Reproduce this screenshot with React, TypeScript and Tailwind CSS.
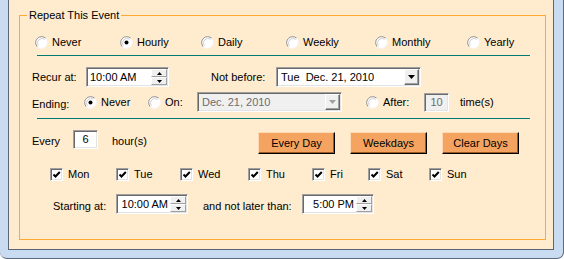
import type { ReactNode } from "react";

const sunken =
  "box-border border border-t-[#a0a0a0] border-l-[#a0a0a0] border-b-white border-r-white shadow-[inset_1px_1px_0_#696969,inset_-1px_-1px_0_#e3e3e3]";

function Radio({ checked = false }: { checked?: boolean }) {
  return (
    <svg width="13" height="13" viewBox="0 0 13 13" className="shrink-0">
      <circle cx="6.5" cy="6.5" r="6" fill="#fff" />
      <path d="M2.26 10.74 A6 6 0 0 1 10.74 2.26" fill="none" stroke="#8f8f8f" />
      <path d="M10.74 2.26 A6 6 0 0 1 2.26 10.74" fill="none" stroke="#f4f4f4" />
      <path d="M3.3 9.7 A4.6 4.6 0 0 1 9.7 3.3" fill="none" stroke="#d0d0d0" />
      {checked ? <circle cx="6.5" cy="6.5" r="2" fill="#000" /> : null}
    </svg>
  );
}

function Check() {
  return (
    <div className={`flex h-[13px] w-[13px] shrink-0 items-center justify-center bg-white ${sunken}`}>
      <svg width="9" height="9" viewBox="0 0 9 9">
        <path d="M1.5 4.5 L3.5 6.5 L7.8 2" fill="none" stroke="#000" strokeWidth="2" />
      </svg>
    </div>
  );
}

function SpinButton({ up }: { up?: boolean }) {
  return (
    <div className="flex flex-1 items-center justify-center border border-t-white border-l-white border-b-[#a0a0a0] border-r-[#a0a0a0] bg-[#f0f0f0]">
      <svg width="5" height="3" viewBox="0 0 5 3">
        <path d={up ? "M0 3 L2.5 0 L5 3Z" : "M0 0 L5 0 L2.5 3Z"} fill="#000" />
      </svg>
    </div>
  );
}

function TimeBox({ value, width, right }: { value: string; width: string; right?: boolean }) {
  return (
    <div className={`flex h-[20px] bg-white ${width} ${sunken}`}>
      <span className={`flex-1 leading-[18px] ${right ? "pr-[2px] text-right" : "pl-[3px]"}`}>{value}</span>
      <div className="my-[1px] mr-[1px] flex w-[16px] flex-col">
        <SpinButton up />
        <SpinButton />
      </div>
    </div>
  );
}

function Combo({ value, disabled }: { value: string; disabled?: boolean }) {
  return (
    <div className={`flex h-[20px] w-[145px] ${disabled ? "bg-[#f0f0f0] text-[#6d6d6d]" : "bg-white"} ${sunken}`}>
      <span className="flex-1 whitespace-pre pl-[4px] leading-[18px]">{value}</span>
      <div className="my-[1px] mr-[1px] flex w-[15px] items-center justify-center border border-t-white border-l-white border-b-[#696969] border-r-[#696969] bg-[#f0f0f0] shadow-[inset_-1px_-1px_0_#a0a0a0]">
        <svg width="7" height="4" viewBox="0 0 7 4">
          <path d="M0 0 L7 0 L3.5 4Z" fill={disabled ? "#a0a0a0" : "#000"} />
        </svg>
      </div>
    </div>
  );
}

function OrangeButton({ children }: { children: ReactNode }) {
  return (
    <button
      type="button"
      className="h-[22px] w-[77px] border border-t-[#ffd9b4] border-l-[#ffd9b4] border-b-black border-r-black bg-[#f4a460] shadow-[inset_-1px_-1px_0_#9a5a28] leading-[18px]"
    >
      {children}
    </button>
  );
}

const frequencies: [string, string, boolean][] = [
  ["Never", "w-[85px]", false],
  ["Hourly", "w-[81px]", true],
  ["Daily", "w-[85px]", false],
  ["Weekly", "w-[89px]", false],
  ["Monthly", "w-[92px]", false],
  ["Yearly", "", false]
];

const days: [string, string][] = [
  ["Mon", "w-[66px]"],
  ["Tue", "w-[64px]"],
  ["Wed", "w-[68px]"],
  ["Thu", "w-[64px]"],
  ["Fri", "w-[56px]"],
  ["Sat", "w-[61px]"],
  ["Sun", ""]
];

export default function App() {
  return (
    <div className="box-border h-[259px] w-[564px] overflow-hidden rounded-b-[7px] border-r border-b border-[#5f6b7a] bg-[#c8dbf1] pr-[9px] pb-[8px] pl-[8px] font-['Liberation_Sans',Arial,sans-serif] text-[11px] leading-[13px] text-black">
      <div className="box-border h-[250px] border-x border-b border-[#5a6473] bg-[#ffebcd] pt-[9px] pr-[7px] pl-[10px]">
        <fieldset className="border border-[#ffa833] pb-[25px]">
          <legend className="ml-[7px] px-[2px] leading-[13px]">Repeat This Event</legend>

          <div className="mt-[14px] flex h-[13px] items-center pl-[15px]">
            {frequencies.map(([label, width, checked]) => (
              <label className={`flex items-center gap-[4px] ${width}`} key={label}>
                <Radio checked={checked} />
                <span>{label}</span>
              </label>
            ))}
          </div>

          <div className="mt-[6px] ml-[17px] h-px w-[493px] bg-[#007a72]" />

          <div className="mt-[11px] flex h-[20px] items-center pl-[12px]">
            <span className="w-[54px]">Recur at:</span>
            <TimeBox value="10:00 AM" width="w-[83px]" />
            <span className="ml-[42px] w-[65px]">Not before:</span>
            <Combo value="Tue  Dec. 21, 2010" />
          </div>

          <div className="mt-[5px] flex h-[20px] items-center pl-[12px]">
            <span className="w-[52px] pt-[4px]">Ending:</span>
            <label className="flex w-[64px] items-center gap-[4px]">
              <Radio checked />
              <span>Never</span>
            </label>
            <label className="flex w-[49px] items-center gap-[4px]">
              <Radio />
              <span>On:</span>
            </label>
            <Combo value="Dec. 21, 2010" disabled />
            <label className="ml-[24px] flex w-[58px] items-center gap-[4px]">
              <Radio />
              <span>After:</span>
            </label>
            <div className={`h-[19px] w-[25px] bg-[#f0f0f0] text-center leading-[17px] text-[#6d6d6d] ${sunken}`}>10</div>
            <span className="ml-[11px]">time(s)</span>
          </div>

          <div className="mt-[6px] ml-[17px] h-px w-[493px] bg-[#007a72]" />

          <div className="mt-[11px] flex items-start pl-[12px]">
            <span className="mt-[5px] w-[41px]">Every</span>
            <div className={`h-[19px] w-[25px] bg-white text-center leading-[17px] ${sunken}`}>6</div>
            <span className="mt-[5px] ml-[14px] w-[146px]">hour(s)</span>
            <div className="mt-[2px] flex gap-[15px]">
              <OrangeButton>Every Day</OrangeButton>
              <OrangeButton>Weekdays</OrangeButton>
              <OrangeButton>Clear Days</OrangeButton>
            </div>
          </div>

          <div className="mt-[14px] flex h-[13px] items-center pl-[30px]">
            {days.map(([day, width]) => (
              <label className={`flex items-center gap-[5px] ${width}`} key={day}>
                <Check />
                <span>{day}</span>
              </label>
            ))}
          </div>

          <div className="mt-[13px] flex h-[20px] items-center pl-[33px]">
            <span className="w-[63px] pt-[5px]">Starting at:</span>
            <TimeBox value="10:00 AM" width="w-[72px]" right />
            <span className="ml-[15px] w-[99px] pt-[5px]">and not later than:</span>
            <TimeBox value="5:00 PM" width="w-[72px]" right />
          </div>
        </fieldset>
      </div>
    </div>
  );
}
